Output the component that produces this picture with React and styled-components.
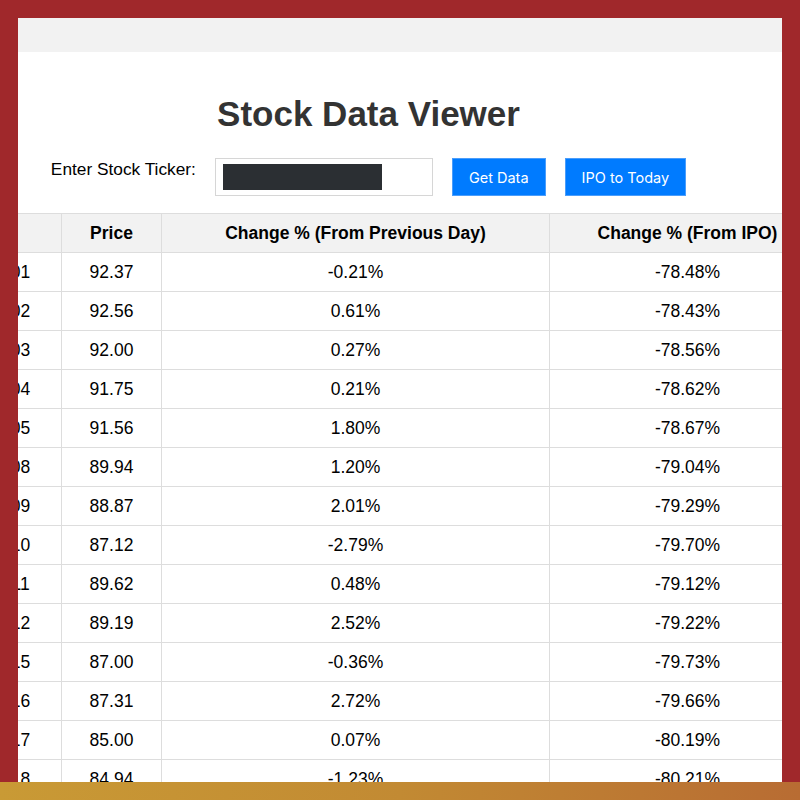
import React from "react";
import styled, { createGlobalStyle } from "styled-components";

const rows = [
  ["2024-04-01", "92.37", "-0.21%", "-78.48%"],
  ["2024-04-02", "92.56", "0.61%", "-78.43%"],
  ["2024-04-03", "92.00", "0.27%", "-78.56%"],
  ["2024-04-04", "91.75", "0.21%", "-78.62%"],
  ["2024-04-05", "91.56", "1.80%", "-78.67%"],
  ["2024-04-08", "89.94", "1.20%", "-79.04%"],
  ["2024-04-09", "88.87", "2.01%", "-79.29%"],
  ["2024-04-10", "87.12", "-2.79%", "-79.70%"],
  ["2024-04-11", "89.62", "0.48%", "-79.12%"],
  ["2024-04-12", "89.19", "2.52%", "-79.22%"],
  ["2024-04-15", "87.00", "-0.36%", "-79.73%"],
  ["2024-04-16", "87.31", "2.72%", "-79.66%"],
  ["2024-04-17", "85.00", "0.07%", "-80.19%"],
  ["2024-04-18", "84.94", "-1.23%", "-80.21%"],
  ["2024-04-19", "84.10", "-0.99%", "-80.40%"],
];

const App = () => {
  return (
    <>
      <GlobalStyle />
      <Frame>
        <Screen>
          <Viewport>
            <TopBar />
            <Header>
              <Title>Stock Data Viewer</Title>
              <Controls>
                <Label>Enter Stock Ticker:</Label>
                <InputBox>
                  <Redacted />
                </InputBox>
                <Button>Get Data</Button>
                <Button>IPO to Today</Button>
              </Controls>
            </Header>
            <Table>
              <colgroup>
                <col style={{ width: 142 }} />
                <col style={{ width: 100 }} />
                <col style={{ width: 388 }} />
                <col style={{ width: 276 }} />
              </colgroup>
              <thead>
                <tr>
                  <Th $date>Date</Th>
                  <Th>Price</Th>
                  <Th>Change % (From Previous Day)</Th>
                  <Th>Change % (From IPO)</Th>
                </tr>
              </thead>
              <tbody>
                {rows.map((r) => (
                  <tr key={r[0]}>
                    {r.map((v, i) => (
                      <Td key={i} $date={i === 0}>
                        {v}
                      </Td>
                    ))}
                  </tr>
                ))}
              </tbody>
            </Table>
          </Viewport>
        </Screen>
        <GoldBar />
      </Frame>
    </>
  );
};
export default App;

const GlobalStyle = createGlobalStyle`
  html, body {
    margin: 0;
    padding: 0;
    background: #a0282b;
  }
`;

const Frame = styled.div`
  width: 800px;
  height: 800px;
  display: flex;
  flex-direction: column;
  background: #a0282b;
  overflow: hidden;
`;

const Screen = styled.div`
  flex: 1;
  padding: 18px 18px 0 18px;
  min-height: 0;
  display: flex;
`;

const Viewport = styled.div`
  flex: 1;
  background: #fff;
  overflow: hidden;
  font-family: "Liberation Sans", Arial, sans-serif;
  color: #000;
`;

const TopBar = styled.div`
  height: 34px;
  background: #f2f2f2;
`;

const Header = styled.div`
  display: flex;
  flex-direction: column;
  align-items: center;
  padding-right: 63px;
`;

const Title = styled.h1`
  font-size: 35px;
  font-weight: 700;
  color: #333;
  margin: 42px 0 24px 0;
  line-height: 40px;
`;

const Controls = styled.div`
  display: flex;
  align-items: flex-start;
  gap: 19px;
`;

const Label = styled.label`
  font-size: 17.3px;
  line-height: 20px;
  padding-top: 1px;
`;

const InputBox = styled.div`
  width: 218px;
  height: 38px;
  box-sizing: border-box;
  border: 1px solid #d6d6d6;
  padding: 5px 7px;
`;

const Redacted = styled.div`
  width: 159px;
  height: 26px;
  background: #2b2f33;
`;

const Button = styled.button`
  height: 38px;
  box-sizing: border-box;
  padding: 0 16px;
  background: #007bff;
  border: 1px solid #4a9dfb;
  border-radius: 0;
  color: #fff;
  font-family: Inter, "Liberation Sans", sans-serif;
  font-size: 14.5px;
`;

const Table = styled.table`
  margin-top: 17px;
  margin-left: -99px;
  width: 906px;
  table-layout: fixed;
  border-collapse: collapse;
  font-size: 17.5px;
`;

const Th = styled.th`
  height: 38px;
  padding: ${(p) => (p.$date ? "0 20px 0 10px" : "0 10px")};
  background: #f2f2f2;
  border: 1px solid #dddddd;
  font-weight: 700;
  text-align: center;
  white-space: nowrap;
`;

const Td = styled.td`
  height: 38px;
  padding: ${(p) => (p.$date ? "0 20px 0 10px" : "0 10px")};
  border: 1px solid #dddddd;
  text-align: center;
  white-space: nowrap;
`;

const GoldBar = styled.div`
  height: 18px;
  flex-shrink: 0;
  background: linear-gradient(90deg, #c99a35 0%, #c28a33 50%, #b86c33 100%);
`;
